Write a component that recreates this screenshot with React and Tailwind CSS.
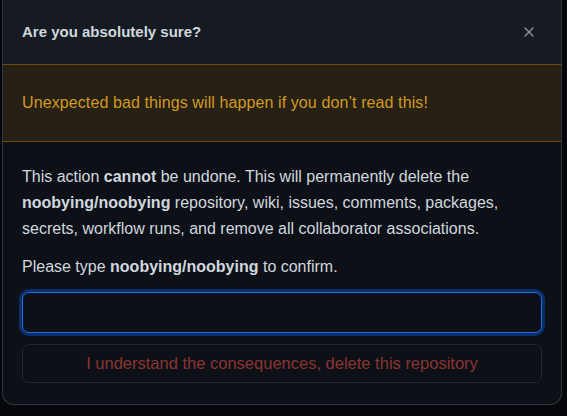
import { X } from "lucide-react";

export default function App() {
    return (
        <div className="w-[567px] h-[416px] bg-[#05070a] overflow-hidden" style={{ fontFamily: '"Liberation Sans", Arial, sans-serif' }}>
            <div className="ml-[2px] w-[560px] h-[405px] bg-[#0d1117] border-x border-b border-[#30363d] rounded-b-[12px] flex flex-col">
                {/* Header */}
                <div className="h-[64px] bg-[#161b22] flex items-center justify-between pl-[19px] pr-[24px]">
                    <h1 className="text-[15px] font-bold text-[#d0d7de]">Are you absolutely sure?</h1>
                    <X size={16} strokeWidth={2} className="text-[#8b949e]" />
                </div>

                {/* Warning flash */}
                <div className="h-[78px] bg-[#272115] border-y border-[#6b4f12] flex items-center px-[19px]">
                    <p className="text-[16px] tracking-[0.1px] text-[#d29922]">Unexpected bad things will happen if you don’t read this!</p>
                </div>

                {/* Body */}
                <div className="px-[19px] pt-[22px]">
                    <p className="text-[16px] leading-[26px] text-[#d0d7de]">
                        This action <strong>cannot</strong> be undone. This will permanently delete the{" "}
                        <strong>noobying/noobying</strong> repository, wiki, issues, comments, packages, secrets, workflow runs, and remove all collaborator associations.
                    </p>
                    <p className="mt-[12px] text-[16px] leading-[26px] text-[#d0d7de]">
                        Please type <strong>noobying/noobying</strong> to confirm.
                    </p>
                    <input
                        type="text"
                        className="mt-[12px] block w-full h-[41px] rounded-[7px] bg-[#0d1117] border border-[#1f6feb] ring-[3px] ring-[#0c2d6b] outline-none px-3 text-[#e6edf3]"
                    />
                    <button
                        disabled
                        className="mt-[11px] w-full h-[39px] rounded-[7px] border border-[#21262d] bg-[#0d1117] text-[16.5px] text-[#8a3432]"
                    >
                        I understand the consequences, delete this repository
                    </button>
                </div>
            </div>
        </div>
    );
}
